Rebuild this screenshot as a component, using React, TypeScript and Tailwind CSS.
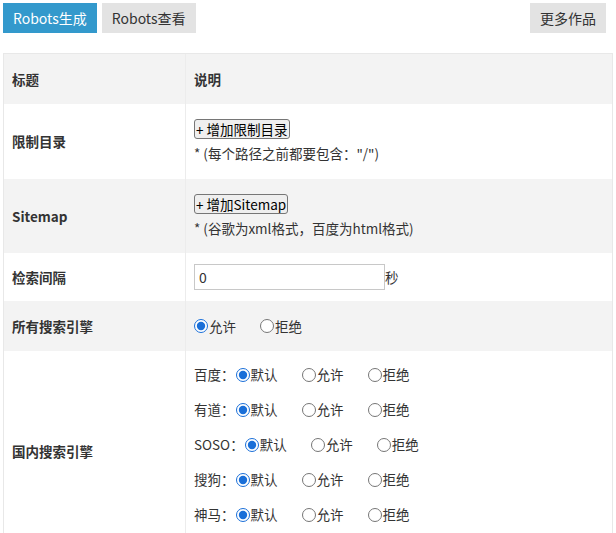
const F = { fontFamily: '"Noto Sans CJK SC", "Microsoft YaHei", sans-serif' };

function Radio({ checked, label, name }: { checked?: boolean; label: string; name: string }) {
  return (
    <label className="inline-flex items-center w-[66px]">
      <input type="radio" name={name} defaultChecked={checked} className="m-0 mr-[1px] w-[14px] h-[14px] accent-[#1a6fd8]" />
      <span>{label}</span>
    </label>
  );
}

export default function App() {
  const engines = ['百度', '有道', 'SOSO', '搜狗', '神马'];
  return (
    <div style={F} className="w-[616px] h-[533px] overflow-hidden bg-white text-[13.5px] text-[#333]">
      <div className="flex px-[3px] pt-[3px]">
        <div className="h-[30px] px-[10px] flex items-center bg-[#3399cc] text-white text-[14px]">Robots生成</div>
        <div className="ml-[5px] h-[30px] px-[10px] flex items-center bg-[#e3e3e3] text-[#333] text-[14px]">Robots查看</div>
        <div className="ml-auto mr-[7px] h-[30px] px-[10px] flex items-center bg-[#e3e3e3] text-[#333] text-[14px]">更多作品</div>
      </div>
      <div className="mt-[20px] mx-[3px] border border-[#e8e8e8] w-[610px]">
        <div className="flex h-[50px] bg-[#f3f3f3] font-bold">
          <div className="w-[182px] px-[8px] flex items-center border-r border-[#ececec]">标题</div>
          <div className="flex-1 px-[8px] flex items-center">说明</div>
        </div>
        <div className="flex h-[75px]">
          <div className="w-[182px] px-[8px] flex items-center border-r border-[#ececec] font-bold">限制目录</div>
          <div className="flex-1 px-[8px] flex flex-col justify-center">
            <button className="self-start border border-[#767676] rounded-[3px] bg-[#efefef] px-[1px] h-[20px] leading-[18px] text-black">+ 增加限制目录</button>
            <div className="mt-[4px]">* (每个路径之前都要包含："/")</div>
          </div>
        </div>
        <div className="flex h-[74px] bg-[#f3f3f3]">
          <div className="w-[182px] px-[8px] flex items-center border-r border-[#ececec] font-bold">Sitemap</div>
          <div className="flex-1 px-[8px] flex flex-col justify-center">
            <button className="self-start border border-[#767676] rounded-[3px] bg-[#efefef] px-[1px] h-[20px] leading-[18px] text-black">+ 增加Sitemap</button>
            <div className="mt-[4px]">* (谷歌为xml格式，百度为html格式)</div>
          </div>
        </div>
        <div className="flex h-[48px]">
          <div className="w-[182px] px-[8px] flex items-center border-r border-[#ececec] font-bold">检索间隔</div>
          <div className="flex-1 px-[8px] flex items-center">
            <input defaultValue="0" className="w-[191px] h-[26px] border border-[#c8c8c8] px-[4px] outline-none text-[14px]" />
            <span>秒</span>
          </div>
        </div>
        <div className="flex h-[50px] bg-[#f3f3f3]">
          <div className="w-[182px] px-[8px] flex items-center border-r border-[#ececec] font-bold">所有搜索引擎</div>
          <div className="flex-1 px-[8px] flex items-center">
            <Radio name="all" checked label="允许" />
            <Radio name="all" label="拒绝" />
          </div>
        </div>
        <div className="flex h-[200px]">
          <div className="w-[182px] px-[8px] flex items-center border-r border-[#ececec] font-bold">国内搜索引擎</div>
          <div className="flex-1 px-[8px] pt-[6px] flex flex-col">
            {engines.map((e) => (
              <div key={e} className="h-[35px] flex items-center">
                <span className="mr-[1px]">{e}：</span>
                <Radio name={e} checked label="默认" />
                <Radio name={e} label="允许" />
                <Radio name={e} label="拒绝" />
              </div>
            ))}
          </div>
        </div>
      </div>
    </div>
  );
}
